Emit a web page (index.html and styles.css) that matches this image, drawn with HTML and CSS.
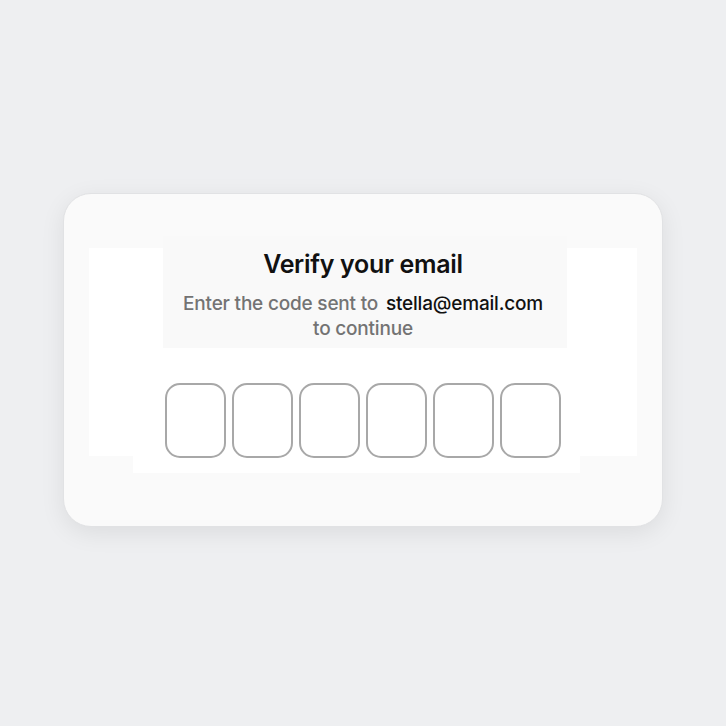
FILE: index.html
```html
<!DOCTYPE html>
<html lang="en">
<head>
<meta charset="utf-8">
<title>Verify your email</title>
<link rel="stylesheet" href="styles.css">
</head>
<body>
  <main class="card">
    <section class="panel">
      <header class="heading">
        <h1 class="title">Verify your email</h1>
        <p class="subtitle">Enter the code sent to <span class="email">stella@email.com</span><br>to continue</p>
      </header>
      <div class="code-row">
        <input class="digit" type="text" maxlength="1" aria-label="Digit 1">
        <input class="digit" type="text" maxlength="1" aria-label="Digit 2">
        <input class="digit" type="text" maxlength="1" aria-label="Digit 3">
        <input class="digit" type="text" maxlength="1" aria-label="Digit 4">
        <input class="digit" type="text" maxlength="1" aria-label="Digit 5">
        <input class="digit" type="text" maxlength="1" aria-label="Digit 6">
      </div>
    </section>
  </main>
</body>
</html>
```
FILE: styles.css
```css
html, body {
  margin: 0;
  padding: 0;
}
body {
  background: #eeeff1;
  width: 726px;
  height: 726px;
  box-sizing: border-box;
  padding-top: 193px;
  font-family: Inter, "Noto Sans", sans-serif;
}
.card {
  box-sizing: border-box;
  width: 600px;
  height: 334px;
  margin: 0 0 0 63px;
  background: #fafafa;
  border: 1px solid #e1e2e4;
  border-radius: 28px;
  box-shadow: 0 6px 24px rgba(0, 0, 0, 0.08);
  padding: 54px 25px 0 25px;
}
.panel {
  background: #ffffff;
  height: 208px;
  display: flex;
  flex-direction: column;
}
.heading {
  flex-shrink: 0;
  box-sizing: border-box;
  width: 404px;
  height: 112px;
  margin: -12px 0 0 74px;
  background: #f9f9f9;
  text-align: center;
  padding: 12px 4px 0 0;
}
.title {
  margin: 0;
  font-size: 25px;
  line-height: 32px;
  font-weight: 600;
  color: #111111;
  letter-spacing: -0.3px;
}
.subtitle {
  margin: 11px 0 0 0;
  font-size: 19px;
  line-height: 25px;
  font-weight: 500;
  color: #737373;
  letter-spacing: -0.2px;
}
.email {
  color: #111111;
  margin-left: 3px;
}
.code-row {
  flex-shrink: 0;
  box-sizing: border-box;
  width: 447px;
  margin: 15px 0 0 44px;
  padding: 20px 20px 15px 32px;
  background: #ffffff;
  display: flex;
  gap: 6px;
}
.digit {
  box-sizing: border-box;
  width: 61px;
  height: 75px;
  margin: 0;
  padding: 0;
  border: 2px solid #a8a8a8;
  border-radius: 15px;
  background: #ffffff;
  font-family: Inter, "Noto Sans", sans-serif;
  font-size: 28px;
  text-align: center;
  outline: none;
}
```
